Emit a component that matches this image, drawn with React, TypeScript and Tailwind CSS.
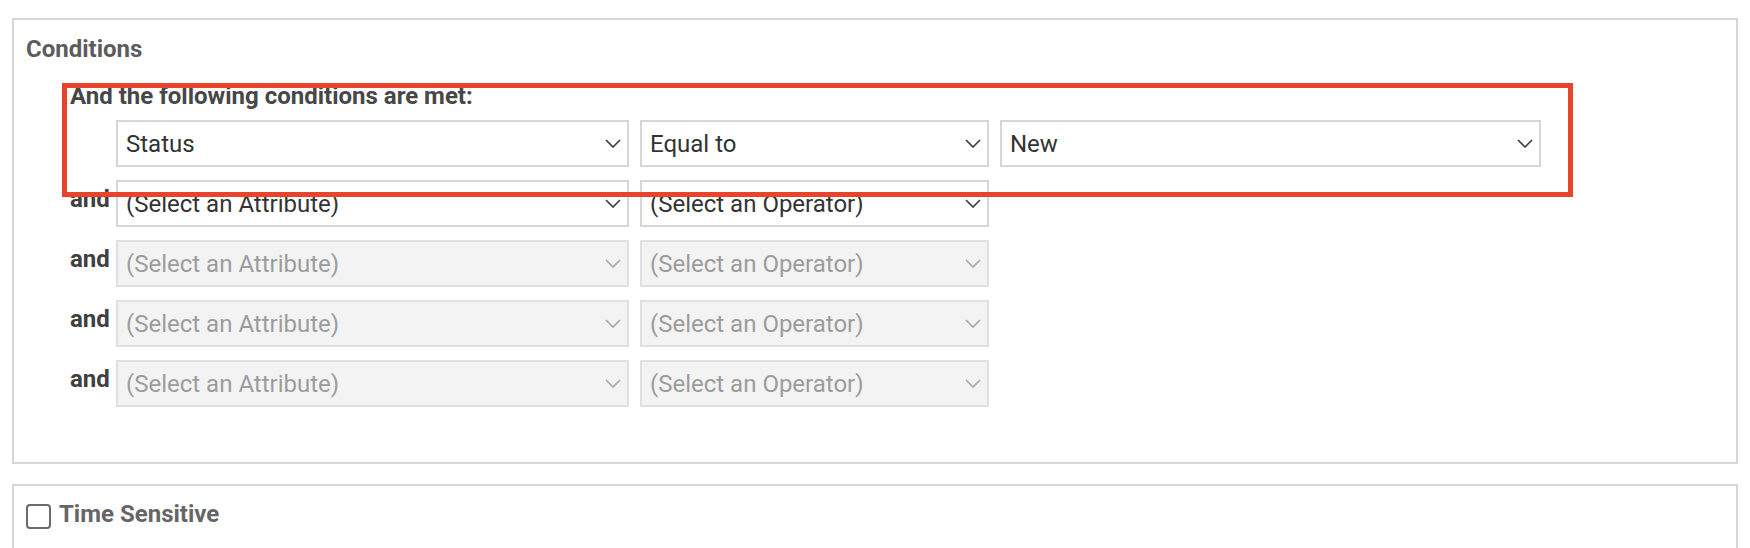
import React from "react";

function Chevron({ disabled }: { disabled?: boolean }) {
  return (
    <svg width="16" height="9" viewBox="0 0 16 9" className="shrink-0">
      <polyline
        points="1,1 8,8 15,1"
        fill="none"
        stroke={disabled ? "#a8a8a8" : "#3f3f3f"}
        strokeWidth="1.7"
      />
    </svg>
  );
}

function Select({
  text,
  width,
  disabled,
}: {
  text: string;
  width: string;
  disabled?: boolean;
}) {
  return (
    <div
      className={
        "h-[47px] flex items-center justify-between pl-[8px] pr-[6px] border-2 " +
        width +
        " " +
        (disabled
          ? "bg-[#f3f3f3] border-[#e0e0e0] text-[#9c9c9c]"
          : "bg-white border-[#d6d6d6] text-[#333333]")
      }
    >
      <span className="text-[24px] leading-[28px]">{text}</span>
      <Chevron disabled={disabled} />
    </div>
  );
}

function Row({
  label,
  disabled,
}: {
  label?: string;
  disabled?: boolean;
}) {
  return (
    <div className="flex">
      <div className="w-[46px] pt-[5px] text-[24px] leading-[28px] font-bold text-[#404040]">
        {label}
      </div>
      <div className="flex gap-[11px]">
        <Select
          text="(Select an Attribute)"
          width="w-[513px]"
          disabled={disabled}
        />
        <Select
          text="(Select an Operator)"
          width="w-[349px]"
          disabled={disabled}
        />
      </div>
    </div>
  );
}

export default function App() {
  return (
    <div className="relative w-[1750px] h-[548px] overflow-hidden bg-white px-[12px] pt-[18px] font-[Roboto,sans-serif]">
      <div className="h-[446px] border-2 border-[#d6d6d6] pl-[12px] pt-[15px]">
        <div className="text-[24px] leading-[28px] font-bold text-[#5c5c5c]">
          Conditions
        </div>
        <div className="ml-[44px] mt-[19px]">
          <div className="text-[24px] leading-[28px] font-bold text-[#474747]">
            And the following conditions are met:
          </div>
          <div className="mt-[10px] flex flex-col gap-[13px]">
            <div className="flex">
              <div className="w-[46px]" />
              <div className="flex gap-[11px]">
                <Select text="Status" width="w-[513px]" />
                <Select text="Equal to" width="w-[349px]" />
                <Select text="New" width="w-[541px]" />
              </div>
            </div>
            <Row label="and" />
            <Row label="and" disabled />
            <Row label="and" disabled />
            <Row label="and" disabled />
          </div>
        </div>
      </div>
      <div className="mt-[20px] h-[120px] border-2 border-[#d6d6d6] pl-[12px] pt-[14px]">
        <div className="flex items-start">
          <div className="mt-[4px] w-[25px] h-[25px] border-2 border-[#6a6a6a] rounded-[4px] bg-white" />
          <div className="ml-[8px] text-[24px] leading-[28px] font-bold text-[#666666]">
            Time Sensitive
          </div>
        </div>
      </div>
      <div className="absolute left-[62px] top-[83px] w-[1511px] h-[114px] border-[5px] border-[#e8432b] pointer-events-none" />
    </div>
  );
}
